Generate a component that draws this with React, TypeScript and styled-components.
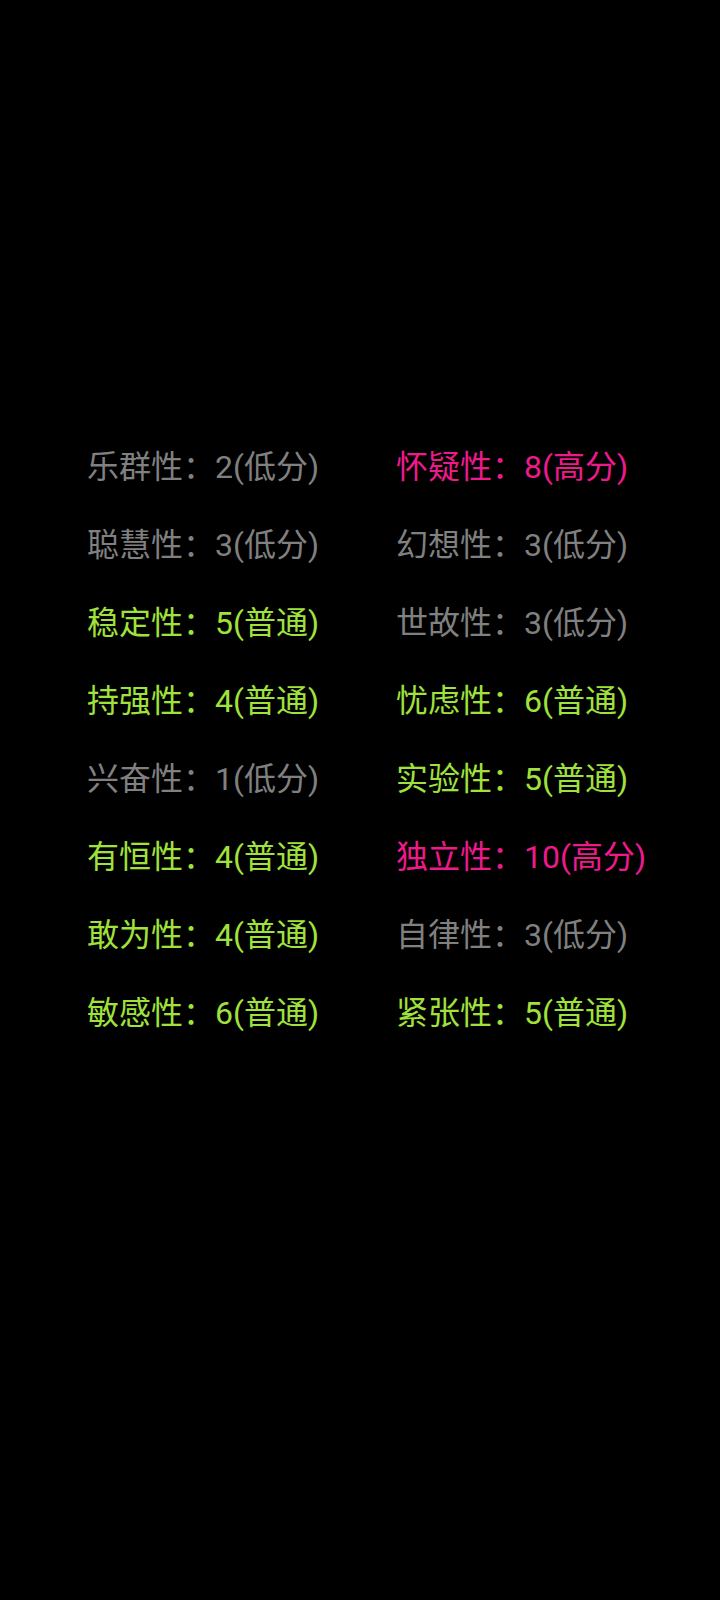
import React from "react";
import styled, { createGlobalStyle } from "styled-components";

const GlobalStyle = createGlobalStyle`
  html, body {
    margin: 0;
    padding: 0;
    background: #000;
  }
  body {
    font-family: Roboto, "Noto Sans CJK SC", sans-serif;
  }
`;

const Page = styled.div`
  min-height: 1600px;
  background: #000;
  padding-top: 428px;
  box-sizing: border-box;
`;

const Grid = styled.div`
  display: grid;
  grid-template-columns: 309px 309px;
  padding-left: 87px;
  grid-auto-rows: 78px;
`;

type Level = "low" | "normal" | "high";

const colors: Record<Level, string> = {
  low: "#808080",
  normal: "#a0e23c",
  high: "#ee1a8c",
};

const Trait = styled.div<{ $level: Level }>`
  font-size: 32px;
  line-height: 78px;
  white-space: nowrap;
  color: ${(p) => colors[p.$level]};
`;

const levelLabel: Record<Level, string> = {
  low: "低分",
  normal: "普通",
  high: "高分",
};

const levelOf = (v: number): Level => (v <= 3 ? "low" : v >= 8 ? "high" : "normal");

const rows: [string, number, string, number][] = [
  ["乐群性", 2, "怀疑性", 8],
  ["聪慧性", 3, "幻想性", 3],
  ["稳定性", 5, "世故性", 3],
  ["持强性", 4, "忧虑性", 6],
  ["兴奋性", 1, "实验性", 5],
  ["有恒性", 4, "独立性", 10],
  ["敢为性", 4, "自律性", 3],
  ["敏感性", 6, "紧张性", 5],
];

const Item = ({ name, value }: { name: string; value: number }) => {
  const level = levelOf(value);
  return (
    <Trait $level={level}>
      {name}：{value}({levelLabel[level]})
    </Trait>
  );
};

export default function App() {
  return (
    <>
      <GlobalStyle />
      <Page>
        <Grid>
          {rows.map(([a, av, b, bv]) => (
            <React.Fragment key={a}>
              <Item name={a} value={av} />
              <Item name={b} value={bv} />
            </React.Fragment>
          ))}
        </Grid>
      </Page>
    </>
  );
}
